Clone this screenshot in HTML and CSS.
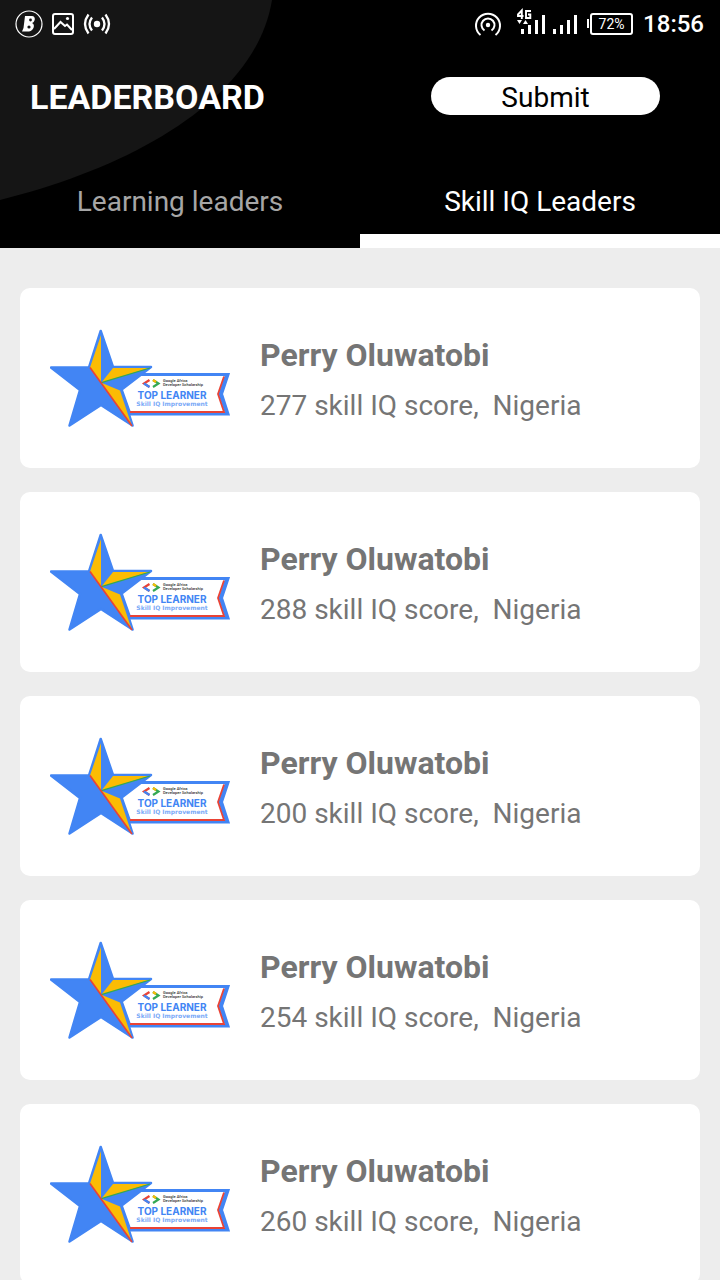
FILE: index.html
```html
<!DOCTYPE html>
<html lang="en">
<head>
<meta charset="utf-8">
<meta name="viewport" content="width=device-width, initial-scale=1">
<title>Leaderboard</title>
<link rel="stylesheet" href="styles.css">
</head>
<body>
<svg class="symbols" aria-hidden="true">
  <symbol id="badge" viewBox="0 0 180 100">
    <path d="M66 46.500H178L171.500 66L178 86H80Z" fill="#fff" stroke="#4285f4" stroke-width="3"/>
    <path d="M176.500 47L170 66L176.500 85.500" fill="none" stroke="#4285f4" stroke-width="3"/>
    <path d="M80 84H174L168 66L174 48.500" fill="none" stroke="#ea4335" stroke-width="1.800"/>
    <path d="M99.500 52L94 55.500L99.500 59" fill="none" stroke="#ea4335" stroke-width="2.200"/>
    <path d="M94 55.500L99.500 59" fill="none" stroke="#4285f4" stroke-width="2.200"/>
    <path d="M103 52L108.500 55.500L103 59" fill="none" stroke="#34a853" stroke-width="2.200"/>
    <path d="M103 52L106 54" fill="none" stroke="#fbbc04" stroke-width="2.200"/>
    <path d="M50.700 3L63 39H101L71 62L82.500 97.500L51 77L19.500 97.500L30 62L1 39.500H39Z" fill="#4285f4" stroke="#4285f4" stroke-width="2.500" stroke-linejoin="round"/>
    <path d="M51 7V54.700L40 39.500Z" fill="#fbbc04"/>
    <path d="M63 40H99L51.300 54.700Z" fill="#fbbc04"/>
    <path d="M51.300 54.700L70 62.500L81.500 97Z" fill="#fbbc04"/>
    <path d="M51.300 54.700L100 40" stroke="#34a853" stroke-width="1.300"/>
    <path d="M40 39.500L82 98" stroke="#ea4335" stroke-width="1.600"/>
  </symbol>
</svg>
<header class="header">
  <svg class="header-shape" viewBox="0 0 272 200" aria-hidden="true"><path d="M0 0H272C256 100 130 168 0 200Z" fill="#151515"/></svg>
  <div class="status">
    <svg class="status-left" viewBox="0 0 100 32" fill="none" stroke="#fff" aria-hidden="true">
      <circle cx="14" cy="16" r="13" stroke-width="1.200"/>
      <path d="M10 8H17C21 8 20.500 14 17 15C20.500 16 19 23 14 23.500H7L8.500 20Z" fill="#fff" stroke="none"/>
      <circle cx="15.500" cy="12" r="1.400" fill="#151515" stroke="none"/>
      <circle cx="14" cy="19" r="1.600" fill="#151515" stroke="none"/>
      <rect x="38" y="6" width="20" height="20" rx="2" stroke-width="2"/>
      <path d="M39 21L45.500 14L50 18L52 16.500L57 22" stroke-width="2"/>
      <circle cx="52.500" cy="10.500" r="1.600" fill="#fff" stroke="none"/>
      <circle cx="82" cy="16" r="3.200" fill="#fff" stroke="none"/>
      <path d="M77 9.500Q72 16 77 22.500M87 9.500Q92 16 87 22.500M73.500 6.500Q66.500 16 73.500 25.500M90.500 6.500Q97.500 16 90.500 25.500" stroke-width="2.300"/>
    </svg>
    <div class="status-right">
      <svg class="hotspot" viewBox="0 0 28 28" fill="none" stroke="#fff" stroke-width="2" aria-hidden="true">
        <circle cx="14" cy="15" r="2.200" fill="#fff" stroke="none"/>
        <path d="M10.500 20.500A6.500 6.500 0 1 1 17.500 20.500M6.500 25A12 12 0 1 1 21.500 25"/>
      </svg>
      <svg class="signal" viewBox="0 0 62 28" fill="#fff" role="img" aria-label="4G signal">
        <path d="M6.500 8H1V6.500L4.800 2.500V11" fill="none" stroke="#fff" stroke-width="1.900"/>
        <path d="M14 3H9V10H13.300V6.500H11" fill="none" stroke="#fff" stroke-width="1.900"/>
        <path d="M0 12H5L2.500 16ZM6 16H11L8.500 12Z"/>
        <path d="M4 21H7V26H4ZM11 17H14V26H11ZM18 12H21V26H18ZM25 7H28V26H25ZM36 21H39V26H36ZM43 17H46V26H43ZM50 12H53V26H50ZM57 7H60V26H57Z"/>
      </svg>
      <span class="battery">72%</span>
      <time class="clock">18:56</time>
    </div>
  </div>
  <div class="title-row">
    <h1 class="title">LEADERBOARD</h1>
    <button class="submit" type="button">Submit</button>
  </div>
  <nav class="tabs">
    <a class="tab" href="#learning">Learning leaders</a>
    <a class="tab tab-active" href="#skill" aria-current="page">Skill IQ Leaders</a>
  </nav>
</header>
<main class="list" id="skill">
  <article class="card">
    <svg class="badge" viewBox="0 0 180 100"><use href="#badge"/><text x="113" y="54" class="badge-org">Google Africa</text><text x="113" y="58" class="badge-org">Developer Scholarship</text><text x="122" y="71" class="badge-title">TOP LEARNER</text><text x="122" y="78" class="badge-sub">Skill IQ Improvement</text></svg>
    <div class="info"><h2 class="name">Perry Oluwatobi</h2><p class="score">277 skill IQ score,&nbsp; Nigeria</p></div>
  </article>
  <article class="card">
    <svg class="badge" viewBox="0 0 180 100"><use href="#badge"/><text x="113" y="54" class="badge-org">Google Africa</text><text x="113" y="58" class="badge-org">Developer Scholarship</text><text x="122" y="71" class="badge-title">TOP LEARNER</text><text x="122" y="78" class="badge-sub">Skill IQ Improvement</text></svg>
    <div class="info"><h2 class="name">Perry Oluwatobi</h2><p class="score">288 skill IQ score,&nbsp; Nigeria</p></div>
  </article>
  <article class="card">
    <svg class="badge" viewBox="0 0 180 100"><use href="#badge"/><text x="113" y="54" class="badge-org">Google Africa</text><text x="113" y="58" class="badge-org">Developer Scholarship</text><text x="122" y="71" class="badge-title">TOP LEARNER</text><text x="122" y="78" class="badge-sub">Skill IQ Improvement</text></svg>
    <div class="info"><h2 class="name">Perry Oluwatobi</h2><p class="score">200 skill IQ score,&nbsp; Nigeria</p></div>
  </article>
  <article class="card">
    <svg class="badge" viewBox="0 0 180 100"><use href="#badge"/><text x="113" y="54" class="badge-org">Google Africa</text><text x="113" y="58" class="badge-org">Developer Scholarship</text><text x="122" y="71" class="badge-title">TOP LEARNER</text><text x="122" y="78" class="badge-sub">Skill IQ Improvement</text></svg>
    <div class="info"><h2 class="name">Perry Oluwatobi</h2><p class="score">254 skill IQ score,&nbsp; Nigeria</p></div>
  </article>
  <article class="card">
    <svg class="badge" viewBox="0 0 180 100"><use href="#badge"/><text x="113" y="54" class="badge-org">Google Africa</text><text x="113" y="58" class="badge-org">Developer Scholarship</text><text x="122" y="71" class="badge-title">TOP LEARNER</text><text x="122" y="78" class="badge-sub">Skill IQ Improvement</text></svg>
    <div class="info"><h2 class="name">Perry Oluwatobi</h2><p class="score">260 skill IQ score,&nbsp; Nigeria</p></div>
  </article>
</main>
</body>
</html>
```
FILE: styles.css
```css
* { box-sizing: border-box; }

body {
  margin: 0;
  height: 100vh;
  display: flex;
  flex-direction: column;
  background: #ededed;
  color: #757575;
  font-family: Roboto, "Liberation Sans", sans-serif;
  font-size: 28px;
}

h1, h2, p { margin: 0; }

.symbols { position: absolute; width: 0; height: 0; }

.header {
  position: relative;
  z-index: 0;
  flex: none;
  background: #000;
  color: #fff;
}

.header-shape {
  position: absolute;
  z-index: -1;
  top: 0;
  left: 0;
  width: 272px;
  height: 200px;
}

.status {
  display: flex;
  justify-content: space-between;
  align-items: center;
  height: 48px;
  padding: 0 16px 0 15px;
}

.status-left { width: 100px; height: 32px; }

.status-right { display: flex; align-items: center; }

.hotspot { width: 28px; height: 28px; margin-right: 15px; }

.signal { width: 62px; height: 28px; margin: -4px 11px 0 0; }

.battery {
  position: relative;
  width: 43px;
  height: 22px;
  margin-right: 10px;
  border: 2px solid #fff;
  border-radius: 3px;
  font-size: 14px;
  line-height: 18px;
  text-align: center;
}

.battery::before {
  content: "";
  position: absolute;
  left: -5px;
  top: 4px;
  width: 2px;
  height: 9px;
  background: #fff;
}

.clock { font-size: 24px; font-weight: 500; line-height: 50px; }

.title-row {
  display: flex;
  justify-content: space-between;
  align-items: center;
  padding: 28px 60px 52px 30px;
}

.title { padding-top: 2px; font-size: 34px; line-height: 38px; font-weight: 700; }

.submit {
  width: 229px;
  height: 38px;
  padding: 2px 0 0;
  border: 0;
  border-radius: 19px;
  background: #fff;
  color: #000;
  font: inherit;
  line-height: 38px;
}

.tabs { display: grid; grid-template-columns: 1fr 1fr; }

.tab {
  height: 80px;
  border-bottom: 14px solid transparent;
  color: #a6a6a6;
  line-height: 68px;
  text-align: center;
  text-decoration: none;
}

.tab-active { border-color: #fff; color: #fff; }

.list {
  flex: 1;
  min-height: 0;
  display: flex;
  flex-direction: column;
  gap: 24px;
  padding: 40px 20px;
  overflow-y: auto;
  scrollbar-width: none;
}

.card {
  flex: none;
  display: flex;
  align-items: center;
  gap: 30px;
  padding: 40px 30px;
  border-radius: 10px;
  background: #fff;
}

.badge { flex: none; width: 180px; height: 100px; }

.info { display: flex; flex-direction: column; gap: 11px; padding-top: 5px; }

.name { font-size: 32px; line-height: 40px; font-weight: 700; }

.score { line-height: 40px; }

.badge-org { font-size: 4px; font-weight: 500; fill: #333; }

.badge-title {
  font-family: Inter, sans-serif;
  font-size: 10px;
  font-weight: 700;
  text-anchor: middle;
  fill: #4285f4;
}

.badge-sub {
  font-family: "DejaVu Sans", sans-serif;
  font-size: 6px;
  font-weight: 700;
  text-anchor: middle;
  fill: #7baaf7;
}
```
